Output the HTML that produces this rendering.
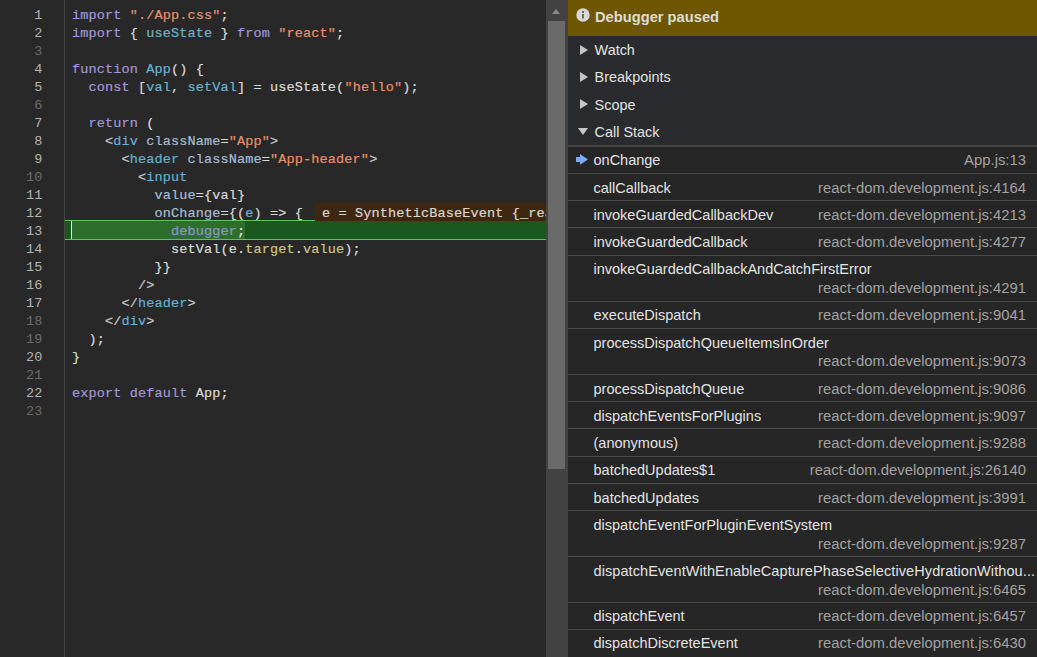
<!DOCTYPE html>
<html><head><meta charset="utf-8">
<style>
*{box-sizing:border-box}
html,body{margin:0;padding:0;width:1037px;height:657px;overflow:hidden;background:#282828}
#ed{position:absolute;left:0;top:0;width:546px;height:657px;background:#282828;overflow:hidden}
#gut{position:absolute;left:64px;top:0;width:1px;height:657px;background:#474747}
.ln{position:absolute;left:0;width:42.5px;margin-top:1.5px;text-align:right;font:13.5px/18px "Liberation Mono",monospace;letter-spacing:.15px;color:#6b6b6b;white-space:pre}
.ln.b{color:#b3b3b3}
.cl{position:absolute;left:72px;margin-top:1.5px;-webkit-text-stroke:.2px;font:13.5px/18px "Liberation Mono",monospace;letter-spacing:.15px;color:#d9d9d9;white-space:pre}
.k{color:#a096d8}
.s{color:#e8906a}
.d{color:#6ab3d2}
.t{color:#62b0d6}
.a{color:#a6bdd2}
.p{color:#d0c47c}
.g{color:#c8c8c8}
#exec{position:absolute;left:65px;top:220px;width:481px;height:20px;background:#1a581e;border-top:1px solid #62c068;border-bottom:1px solid #62c068}
#execT{position:absolute;left:72px;top:221px;width:173px;height:18px;background:#2e6e2d}
#cur{position:absolute;left:71px;top:221px;width:1px;height:18px;background:#e8e8e8}
#wid{position:absolute;left:315px;top:203px;width:240px;height:18px;background:#3d2711;font:13.5px/22px "Liberation Mono",monospace;letter-spacing:.15px;-webkit-text-stroke:.2px;color:#dcd6cc;white-space:pre;padding-left:7px}
#sb{position:absolute;left:546px;top:0;width:22px;height:657px;background:#424242}
#thumb{position:absolute;left:548px;top:21px;width:17px;height:448px;background:#6a6a6a}
#arr{position:absolute;left:551.5px;top:9px;width:0;height:0;border-left:4.8px solid transparent;border-right:4.8px solid transparent;border-bottom:5px solid #8c8c8c}
#side{position:absolute;left:568px;top:0;width:469px;height:657px;background:#262626;font-family:"Liberation Sans",sans-serif}
#ban{position:absolute;left:0;top:0;width:469px;height:36px;background:#6e5600}
#ban .txt{position:absolute;left:26.5px;top:8.2px;font:bold 15.2px/18px "Liberation Sans",sans-serif;color:#dcdcd6;transform:scaleX(.967);transform-origin:0 0;white-space:nowrap}
#info{position:absolute;left:8.3px;top:7.5px}
#hdr{position:absolute;left:0;top:36px;width:469px;height:110px;background:#2a2b2e}
.sec{position:absolute;left:26.6px;font:14.4px/18px "Liberation Sans",sans-serif;color:#e3e3e3;}
.tri{position:absolute;left:12px;width:0;height:0;border-top:5px solid transparent;border-bottom:5px solid transparent;border-left:8px solid #c4c4c4}
.trid{position:absolute;left:10px;width:0;height:0;border-left:5px solid transparent;border-right:5px solid transparent;border-top:7px solid #c8c8c8}
.sep{position:absolute;left:0;width:469px;height:1px;background:#4a4a4a}
.fn{position:absolute;left:25.5px;font:14.5px/18px "Liberation Sans",sans-serif;color:#e3e3e3;white-space:nowrap;}
.loc{position:absolute;right:11px;font:14.85px/18px "Liberation Sans",sans-serif;color:#a2a2a2;white-space:nowrap;}
#arrow{position:absolute;left:8px;top:154px}
</style></head><body>
<div id="ed">
<div id="gut"></div>
<div id="exec"></div>
<div id="execT"></div>
<div id="cur"></div>
<div class="ln b" style="top:5px">1</div>
<div class="ln b" style="top:23px">2</div>
<div class="ln" style="top:41px">3</div>
<div class="ln b" style="top:59px">4</div>
<div class="ln b" style="top:77px">5</div>
<div class="ln" style="top:95px">6</div>
<div class="ln b" style="top:113px">7</div>
<div class="ln b" style="top:131px">8</div>
<div class="ln b" style="top:149px">9</div>
<div class="ln" style="top:167px">10</div>
<div class="ln b" style="top:185px">11</div>
<div class="ln b" style="top:203px">12</div>
<div class="ln b" style="top:221px">13</div>
<div class="ln b" style="top:239px">14</div>
<div class="ln b" style="top:257px">15</div>
<div class="ln b" style="top:275px">16</div>
<div class="ln b" style="top:293px">17</div>
<div class="ln" style="top:311px">18</div>
<div class="ln" style="top:329px">19</div>
<div class="ln b" style="top:347px">20</div>
<div class="ln" style="top:365px">21</div>
<div class="ln b" style="top:383px">22</div>
<div class="ln" style="top:401px">23</div>

<div class="cl" style="top:5px"><span class="k">import</span> <span class="s">"./App.css"</span>;</div>
<div class="cl" style="top:23px"><span class="k">import</span> { <span class="d">useState</span> } <span class="k">from</span> <span class="s">"react"</span>;</div>
<div class="cl" style="top:59px"><span class="k">function</span> <span class="d">App</span>() {</div>
<div class="cl" style="top:77px">  <span class="k">const</span> [<span class="d">val</span>, <span class="d">setVal</span>] = useState(<span class="s">"hello"</span>);</div>
<div class="cl" style="top:113px">  <span class="k">return</span> (</div>
<div class="cl" style="top:131px">    <span class="g">&lt;</span><span class="t">div</span> <span class="a">className</span>=<span class="s">"App"</span><span class="g">&gt;</span></div>
<div class="cl" style="top:149px">      <span class="g">&lt;</span><span class="t">header</span> <span class="a">className</span>=<span class="s">"App-header"</span><span class="g">&gt;</span></div>
<div class="cl" style="top:167px">        <span class="g">&lt;</span><span class="t">input</span></div>
<div class="cl" style="top:185px">          <span class="a">value</span>={val}</div>
<div class="cl" style="top:203px">          <span class="a">onChange</span>={(<span class="d">e</span>) =&gt; {</div>
<div class="cl" style="top:221px">            <span style="color:#8e95cc">debugger</span><span style="color:#e6e6e6">;</span></div>
<div class="cl" style="top:239px">            setVal(e.<span class="p">target</span>.<span class="p">value</span>);</div>
<div class="cl" style="top:257px">          }}</div>
<div class="cl" style="top:275px">        <span class="g">/&gt;</span></div>
<div class="cl" style="top:293px">      <span class="g">&lt;/</span><span class="t">header</span><span class="g">&gt;</span></div>
<div class="cl" style="top:311px">    <span class="g">&lt;/</span><span class="t">div</span><span class="g">&gt;</span></div>
<div class="cl" style="top:329px">  );</div>
<div class="cl" style="top:347px">}</div>
<div class="cl" style="top:383px"><span class="k">export</span> <span class="k">default</span> App;</div>
<div id="wid">e = SyntheticBaseEvent {_reactName: 'onChange'</div>
</div>
<div id="sb"></div>
<div id="thumb"></div>
<div id="arr"></div>

<div id="side">
<div id="ban"><svg id="info" width="14" height="14" viewBox="0 0 14 14"><circle cx="7" cy="7" r="6.7" fill="#d8d6d8"/><circle cx="7" cy="4.0" r="0.95" fill="#4f4100"/><rect x="6.3" y="6" width="1.4" height="4.5" fill="#4f4100"/></svg><div class="txt">Debugger paused</div></div>
<div id="hdr">
<div class="tri" style="top:9px"></div><div class="sec" style="top:5px">Watch</div>
<div class="tri" style="top:36px"></div><div class="sec" style="top:32px">Breakpoints</div>
<div class="tri" style="top:63px"></div><div class="sec" style="top:59.5px">Scope</div>
<div class="trid" style="top:92px"></div><div class="sec" style="top:87px">Call Stack</div>
</div>
<div id="cs">
<svg id="arrow" width="14" height="12" viewBox="0 0 14 12"><polygon points="0,3 4,3 4,0 12,5.4 4,10.7 4,8 0,8" fill="#7cacf8"/></svg>
<!--CS-->
<div class="sep" style="top:145px;height:2px;background:#444"></div>
<div class="fn" style="top:151.4px">onChange</div>
<div class="loc" style="top:151.3px">App.js:13</div>
<div class="sep" style="top:173px"></div>
<div class="fn" style="top:179.0px">callCallback</div>
<div class="loc" style="top:178.9px">react-dom.development.js:4164</div>
<div class="sep" style="top:200px"></div>
<div class="fn" style="top:206.2px">invokeGuardedCallbackDev</div>
<div class="loc" style="top:206.1px">react-dom.development.js:4213</div>
<div class="sep" style="top:227px"></div>
<div class="fn" style="top:233.0px">invokeGuardedCallback</div>
<div class="loc" style="top:232.9px">react-dom.development.js:4277</div>
<div class="sep" style="top:255px"></div>
<div class="fn" style="top:260.2px">invokeGuardedCallbackAndCatchFirstError</div>
<div class="loc" style="top:279.2px">react-dom.development.js:4291</div>
<div class="sep" style="top:301px"></div>
<div class="fn" style="top:306.1px">executeDispatch</div>
<div class="loc" style="top:306.0px">react-dom.development.js:9041</div>
<div class="sep" style="top:328px"></div>
<div class="fn" style="top:334.1px">processDispatchQueueItemsInOrder</div>
<div class="loc" style="top:351.7px">react-dom.development.js:9073</div>
<div class="sep" style="top:374px"></div>
<div class="fn" style="top:379.6px">processDispatchQueue</div>
<div class="loc" style="top:379.5px">react-dom.development.js:9086</div>
<div class="sep" style="top:401px"></div>
<div class="fn" style="top:406.6px">dispatchEventsForPlugins</div>
<div class="loc" style="top:406.5px">react-dom.development.js:9097</div>
<div class="sep" style="top:428px"></div>
<div class="fn" style="top:433.8px">(anonymous)</div>
<div class="loc" style="top:433.7px">react-dom.development.js:9288</div>
<div class="sep" style="top:456px"></div>
<div class="fn" style="top:461.4px">batchedUpdates$1</div>
<div class="loc" style="top:461.3px">react-dom.development.js:26140</div>
<div class="sep" style="top:483px"></div>
<div class="fn" style="top:488.6px">batchedUpdates</div>
<div class="loc" style="top:488.5px">react-dom.development.js:3991</div>
<div class="sep" style="top:510px"></div>
<div class="fn" style="top:516.0px">dispatchEventForPluginEventSystem</div>
<div class="loc" style="top:534.9px">react-dom.development.js:9287</div>
<div class="sep" style="top:556px"></div>
<div class="fn" style="top:561.7px;letter-spacing:.09px">dispatchEventWithEnableCapturePhaseSelectiveHydrationWithou...</div>
<div class="loc" style="top:580.5px">react-dom.development.js:6465</div>
<div class="sep" style="top:602px"></div>
<div class="fn" style="top:607.3px">dispatchEvent</div>
<div class="loc" style="top:607.2px">react-dom.development.js:6457</div>
<div class="sep" style="top:629px"></div>
<div class="fn" style="top:634.1px">dispatchDiscreteEvent</div>
<div class="loc" style="top:634.0px">react-dom.development.js:6430</div>
<!--/CS-->
</div>
</div>
</body></html>
